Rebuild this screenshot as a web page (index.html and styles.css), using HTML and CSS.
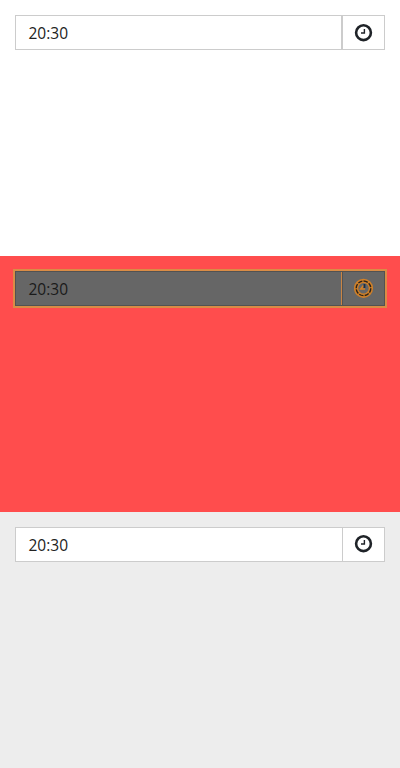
FILE: index.html
```
<!DOCTYPE html>
<html lang="en">
<head>
<meta charset="utf-8">
<title>Time picker</title>
<link rel="stylesheet" href="styles.css">
</head>
<body>
<section class="panel panel-before">
  <div class="time-field">
    <span class="value">20:30</span>
    <span class="button">
      <svg class="clock" viewBox="0 0 20 20"><circle class="ring" cx="9.5" cy="10.7" r="7.4"/><path class="hands" d="M10.4 7V11H7"/></svg>
    </span>
  </div>
</section>
<section class="panel panel-diff">
  <div class="time-field">
    <span class="value">20:30</span>
    <span class="button">
      <svg class="clock" viewBox="0 0 20 20"><circle class="halo" cx="9.5" cy="10.3" r="7.4"/><circle class="core" cx="9.5" cy="10.3" r="7.3"/><path class="spark" d="M9.5 7.5L6.8 11H11"/><path class="hand" d="M10.5 6V10"/></svg>
    </span>
  </div>
</section>
<section class="panel panel-after">
  <div class="time-field">
    <span class="value">20:30</span>
    <span class="button">
      <svg class="clock" viewBox="0 0 20 20"><circle class="ring" cx="9.5" cy="10.7" r="7.4"/><path class="hands" d="M10.4 7V11H7"/></svg>
    </span>
  </div>
</section>
</body>
</html>
```
FILE: styles.css
```
* { box-sizing: border-box; }
body { margin: 0; font: 15.5px/24px "Open Sans", sans-serif; color: #222; }
.panel { height: 256px; padding: 15px; background: #fff; }
.time-field { display: flex; height: 35px; border: 1px solid #ccc; background: #fff; }
.value { flex: 1; padding: 5px 12.5px 4px; }
.button { display: flex; align-items: center; justify-content: center; width: 42px; border-left: 1px solid #ccc; }
.panel-before .button { width: 43px; border-left-width: 2px; }
.clock { width: 20px; height: 20px; fill: none; margin-top: -1px; }
.ring { stroke: #1f2328; stroke-width: 2.6; }
.hands { stroke: #1f2328; stroke-width: 1.4; }
.panel-diff { background: #ff4d4d; }
.panel-diff .time-field { background: #666; border-color: #525252; outline: 2px solid #d98c46; color: #1a1a1a; }
.panel-diff .value { border-right: 1px solid #c98545; }
.panel-diff .button { border-left-color: #525252; }
.halo { stroke: #d08028; stroke-width: 4.4; }
.core { stroke: #2a221a; stroke-width: 1.4; stroke-dasharray: 4.5 1.2; }
.spark { stroke: #d68125; stroke-width: 1.6; }
.hand { stroke: #182f48; stroke-width: 1.8; }
.panel-after { background: #ededed; }
.panel-after .clock { margin-top: -3px; }
```
